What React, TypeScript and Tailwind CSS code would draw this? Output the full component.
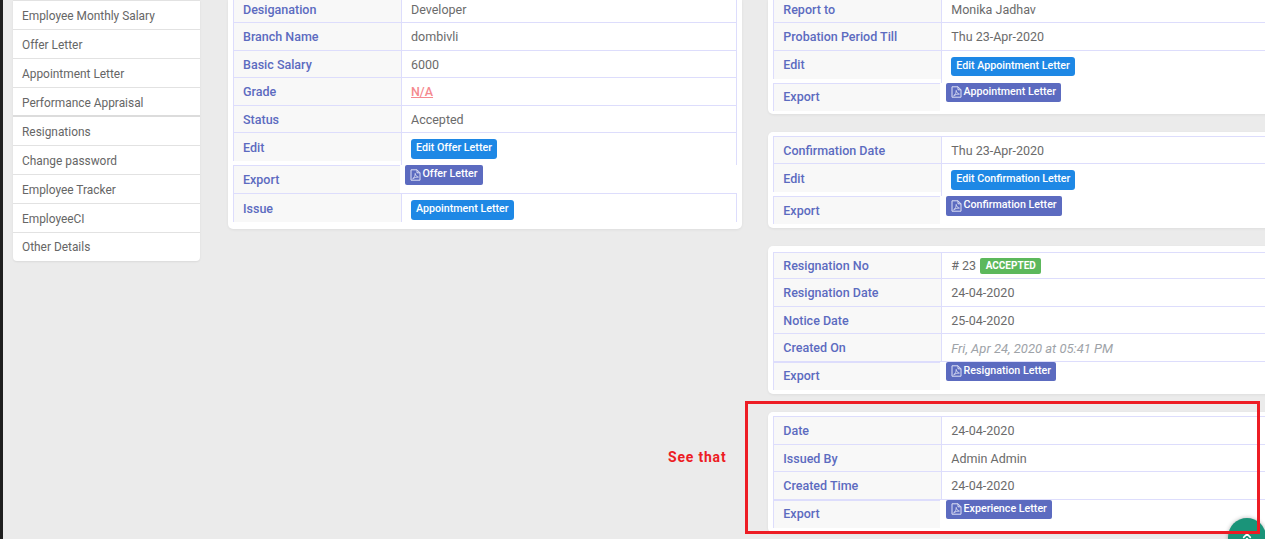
import type { ReactNode } from "react";
import { LuChevronsUp } from "react-icons/lu";

const sideLinks = [
  "Employee Monthly Salary",
  "Offer Letter",
  "Appointment Letter",
  "Performance Appraisal",
  "Resignations",
  "Change password",
  "Employee Tracker",
  "EmployeeCI",
  "Other Details",
];

interface RowProps {
  label: string;
  children: ReactNode;
  kind?: "plain" | "cut" | "loose";
  height?: string;
  first?: boolean;
}

// plain rows close with a line, "cut" rows stop the label short, "loose" rows have no cell borders on the value
function Row({ label, children, kind = "plain", height = "h-[27.5px]", first }: RowProps) {
  if (kind === "cut") {
    return (
      <div className={`flex ${height}`}>
        <div className="flex h-[28px] w-[168px] shrink-0 border-l border-[#ddddfc] bg-[#f8f8f8] pl-[9px] pt-[2px] font-medium text-[#5c6bc0]">
          <span className="self-center">{label}</span>
        </div>
        <div className="flex-1 border-x-[1.5px] border-[#ddddfc] bg-white pl-[9px] pt-[6px]">{children}</div>
      </div>
    );
  }
  if (kind === "loose") {
    return (
      <div className="flex h-[28px]">
        <div className="flex w-[168px] shrink-0 items-center border-x border-t border-[#ddddfc] bg-[#f8f8f8] pl-[9px] pt-px font-medium text-[#5c6bc0]">
          {label}
        </div>
        <div className="-ml-px flex-1 bg-white pl-[5px]">{children}</div>
      </div>
    );
  }
  return (
    <div className={`flex ${height} border-b border-[#ddddfc] ${first ? "border-t" : ""}`}>
      <div className="flex w-[168px] shrink-0 items-center border-l border-[#ddddfc] bg-[#f8f8f8] pl-[9px] pt-[2px] font-medium text-[#5c6bc0]">
        {label}
      </div>
      <div className="flex flex-1 items-center border-x-[1.5px] border-[#ddddfc] bg-white pl-[9px] pt-[2px] text-[#6b6b6b]">
        {children}
      </div>
    </div>
  );
}

function PdfIcon() {
  return (
    <svg width="11" height="12" viewBox="0 0 11 12" fill="none" stroke="#dfe2f5" strokeWidth="1" className="shrink-0">
      <path d="M1 .8h6l3 3v7.4H1z" />
      <path d="M7 .8v3h3" />
      <path d="M2.6 9.8c1.6-.8 2.7-3 2.6-5.4.3 2 1.3 3.2 3.2 3.7-1.9-.1-3.9.5-5.8 1.7z" strokeWidth="0.8" />
    </svg>
  );
}

function EditButton({ children }: { children: ReactNode }) {
  return (
    <span className="inline-flex h-[19.5px] items-center rounded-[3px] bg-[#1e88e5] px-[5px] text-[10.7px] font-medium text-white">
      {children}
    </span>
  );
}

function ExportButton({ children, className = "" }: { children: ReactNode; className?: string }) {
  return (
    <span
      className={`inline-flex h-[19.5px] items-center gap-[1.5px] rounded-[2px] bg-[#5c6bc0] px-[5px] text-[10.7px] font-medium text-white ${className}`}
    >
      <PdfIcon />
      {children}
    </span>
  );
}

function Card({ children, className = "" }: { children: ReactNode; className?: string }) {
  return (
    <section className={`rounded-[5px] bg-white px-[5px] shadow-[0_1px_3px_rgba(0,0,0,0.06)] ${className}`}>
      {children}
    </section>
  );
}

export default function App() {
  return (
    <div className="relative flex h-[539px] w-[1265px] overflow-hidden bg-[#ebebeb] font-['Roboto',sans-serif] text-[12.5px] leading-none">
      <div className="w-[3px] shrink-0 bg-[#1f1f1f]" />

      <nav className="ml-[10px] h-[261px] w-[187px] shrink-0 rounded-b-[4px] border-t border-[#e2e2e2] bg-white text-[11.9px] text-[#666] shadow-[0_1px_2px_rgba(0,0,0,0.08)]">
        {sideLinks.map((link, i) => (
          <div
            key={link}
            className={`flex h-[29px] items-center pl-[9px] ${
              i === 8 ? "" : i === 3 ? "border-b-2 border-[#dcdcdc] pt-[4px]" : "border-b border-[#e2e2e2] pt-[4px]"
            }`}
          >
            {link}
          </div>
        ))}
      </nav>

      <main className="ml-[28px] mt-[-4.5px] w-[514px] shrink-0 self-start">
        <Card className="pb-[7px]">
          <Row label="Desiganation">Developer</Row>
          <Row label="Branch Name">dombivli</Row>
          <Row label="Basic Salary">6000</Row>
          <Row label="Grade">
            <span className="font-medium text-[#f58a8f] underline">N/A</span>
          </Row>
          <Row label="Status">Accepted</Row>
          <Row label="Edit" kind="cut" height="h-[32px]">
            <EditButton>Edit Offer Letter</EditButton>
          </Row>
          <div className="border-b border-[#ddddfc]">
            <Row label="Export" kind="loose">
              <ExportButton>Offer Letter</ExportButton>
            </Row>
          </div>
          <Row label="Issue" kind="cut" height="h-[28px]">
            <EditButton>Appointment Letter</EditButton>
          </Row>
        </Card>
      </main>

      <aside className="ml-[26.3px] mt-[-4.5px] flex w-[514px] shrink-0 flex-col gap-[18px] self-start">
        <Card className="pb-[3.5px]">
          <Row label="Report to">Monika Jadhav</Row>
          <Row label="Probation Period Till">Thu 23-Apr-2020</Row>
          <Row label="Edit" kind="cut" height="h-[32px]">
            <EditButton>Edit Appointment Letter</EditButton>
          </Row>
          <Row label="Export" kind="loose">
            <ExportButton className="ml-[0.7px]">Appointment Letter</ExportButton>
          </Row>
        </Card>

        <Card className="pb-[4px] pt-[4px]">
          <Row label="Confirmation Date" first height="h-[28px]">
            Thu 23-Apr-2020
          </Row>
          <Row label="Edit" kind="cut" height="h-[32px]">
            <EditButton>Edit Confirmation Letter</EditButton>
          </Row>
          <Row label="Export" kind="loose">
            <ExportButton className="ml-[0.7px]">Confirmation Letter</ExportButton>
          </Row>
        </Card>

        <Card className="pb-[4.5px] pt-[5.5px]">
          <Row label="Resignation No" first>
            # 23
            <span className="ml-[4px] inline-flex h-[16px] items-center rounded-[2px] bg-[#5cb85c] px-[5.5px] text-[10px] font-bold text-white">
              ACCEPTED
            </span>
          </Row>
          <Row label="Resignation Date">24-04-2020</Row>
          <Row label="Notice Date">25-04-2020</Row>
          <Row label="Created On">
            <span className="text-[13px] italic text-[#9ea3a8]">Fri, Apr 24, 2020 at 05:41 PM</span>
          </Row>
          <Row label="Export" kind="loose">
            <ExportButton className="ml-[0.7px]">Resignation Letter</ExportButton>
          </Row>
        </Card>

        <Card className="pb-[5px] pt-[4px]">
          <Row label="Date" first height="h-[28.5px]">
            24-04-2020
          </Row>
          <Row label="Issued By">Admin Admin</Row>
          <Row label="Created Time">24-04-2020</Row>
          <Row label="Export" kind="loose">
            <ExportButton className="ml-[0.7px]">Experience Letter</ExportButton>
          </Row>
        </Card>
      </aside>

      {/* annotation drawn over the screenshot */}
      <span className="absolute left-[668px] top-[450px] text-[14px] font-bold tracking-[0.8px] text-[#ed1c24]">See that</span>

      <div className="absolute left-[1228px] top-[518px] flex h-[38px] w-[38px] justify-center rounded-full bg-[#1a9479] pt-[12px] shadow-[0_0_4px_rgba(0,0,0,0.3)]">
        <LuChevronsUp className="text-[16px] text-white" strokeWidth={2.5} />
      </div>

      <div className="absolute left-[745px] top-[401px] h-[133px] w-[515px] border-[3px] border-[#ed1c24]" />
    </div>
  );
}
